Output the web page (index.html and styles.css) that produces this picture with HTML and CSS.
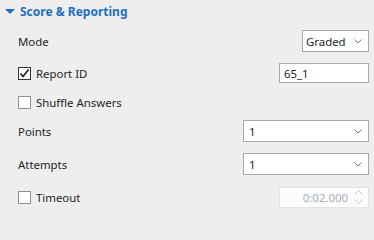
FILE: index.html
```html
<!DOCTYPE html>
<html>
<head>
<meta charset="utf-8">
<link rel="stylesheet" href="styles.css">
</head>
<body>
<div class="panel">
  <div class="header">
    <svg class="tri" width="10" height="5" viewBox="0 0 10 5"><polygon points="0,0 10,0 5,5" fill="#1f6fc0"/></svg>
    <span class="title">Score &amp; Reporting</span>
  </div>

  <div class="row r-mode">
    <span class="label">Mode</span>
    <div class="select sel-mode"><span class="val">Graded</span><svg class="chev" width="8" height="5" viewBox="0 0 8 5"><polyline points="0.5,0.5 4,4 7.5,0.5" fill="none" stroke="#7a7a7a" stroke-width="1"/></svg></div>
  </div>

  <div class="row r-report">
    <span class="check checked"><svg width="11" height="11" viewBox="0 0 11 11"><polyline points="1.5,5.5 4,8.5 9.5,1.5" fill="none" stroke="#1a1a1a" stroke-width="1.6"/></svg></span>
    <span class="label">Report ID</span>
    <div class="input inp-report"><span class="val">65_1</span></div>
  </div>

  <div class="row r-shuffle">
    <span class="check"></span>
    <span class="label">Shuffle Answers</span>
  </div>

  <div class="row r-points">
    <span class="label">Points</span>
    <div class="select sel-wide"><span class="val">1</span><svg class="chev" width="8" height="5" viewBox="0 0 8 5"><polyline points="0.5,0.5 4,4 7.5,0.5" fill="none" stroke="#7a7a7a" stroke-width="1"/></svg></div>
  </div>

  <div class="row r-attempts">
    <span class="label">Attempts</span>
    <div class="select sel-wide"><span class="val">1</span><svg class="chev" width="8" height="5" viewBox="0 0 8 5"><polyline points="0.5,0.5 4,4 7.5,0.5" fill="none" stroke="#7a7a7a" stroke-width="1"/></svg></div>
  </div>

  <div class="row r-timeout">
    <span class="check"></span>
    <span class="label">Timeout</span>
    <div class="input spin disabled"><span class="val">0:02.000</span>
      <span class="arrows">
        <svg width="9" height="5" viewBox="0 0 9 5"><polyline points="0.5,4.5 4.5,0.5 8.5,4.5" fill="none" stroke="#c8c8c8" stroke-width="1"/></svg>
        <svg width="9" height="5" viewBox="0 0 9 5"><polyline points="0.5,0.5 4.5,4.5 8.5,0.5" fill="none" stroke="#c8c8c8" stroke-width="1"/></svg>
      </span>
    </div>
  </div>
</div>
</body>
</html>
```

FILE: styles.css
```css
html, body {
  margin: 0;
  padding: 0;
  background: #eeeeee;
}
body {
  width: 374px;
  height: 216px;
  overflow: hidden;
  font-family: "Noto Sans", "Open Sans", "DejaVu Sans", sans-serif;
  font-size: 11.4px;
  color: #1e1e1e;
}
.panel {
  display: flex;
  flex-direction: column;
  padding-right: 5px;
}
.header {
  height: 22px;
  display: flex;
  align-items: center;
  padding-left: 5px;
}
.tri {
  margin-right: 5px;
  margin-top: 1px;
}
.title {
  font-weight: 700;
  font-size: 12px;
  color: #1f6fc0;
}
.row {
  height: 22px;
  display: flex;
  align-items: center;
  padding-left: 18px;
}
.r-mode { margin-top: 8px; }
.r-report { margin-top: 10px; }
.r-shuffle { margin-top: 7px; }
.r-points { margin-top: 7px; }
.r-attempts { margin-top: 11px; }
.r-timeout { margin-top: 11px; }
.label {
  flex: 0 0 auto;
}
.check {
  width: 11px;
  height: 11px;
  border: 1px solid #8f8f8f;
  background: #ffffff;
  margin-right: 5px;
  display: flex;
  align-items: center;
  justify-content: center;
}
.check.checked {
  border-color: #333333;
}
.select, .input {
  margin-left: auto;
  box-sizing: border-box;
  height: 22px;
  background: #ffffff;
  border: 1px solid #a8a8a8;
  display: flex;
  align-items: center;
  padding-left: 4px;
  padding-right: 6px;
}
.select .val, .input .val {
  flex: 1;
}
.sel-mode { width: 67px; padding-left: 3px; }
.sel-wide { width: 126px; padding-left: 5px; }
.inp-report { width: 90px; height: 20px; padding-left: 4px; }
.chev { margin-top: 1px; }
.spin {
  width: 90px;
  height: 21px;
  border-color: #e4e4e4;
  background: #fcfcfc;
  padding-right: 5px;
}
.spin .val {
  text-align: right;
  color: #a7aebb;
  margin-right: 6px;
}
.arrows {
  display: flex;
  flex-direction: column;
  gap: 4px;
}
.arrows svg { display: block; }
```
